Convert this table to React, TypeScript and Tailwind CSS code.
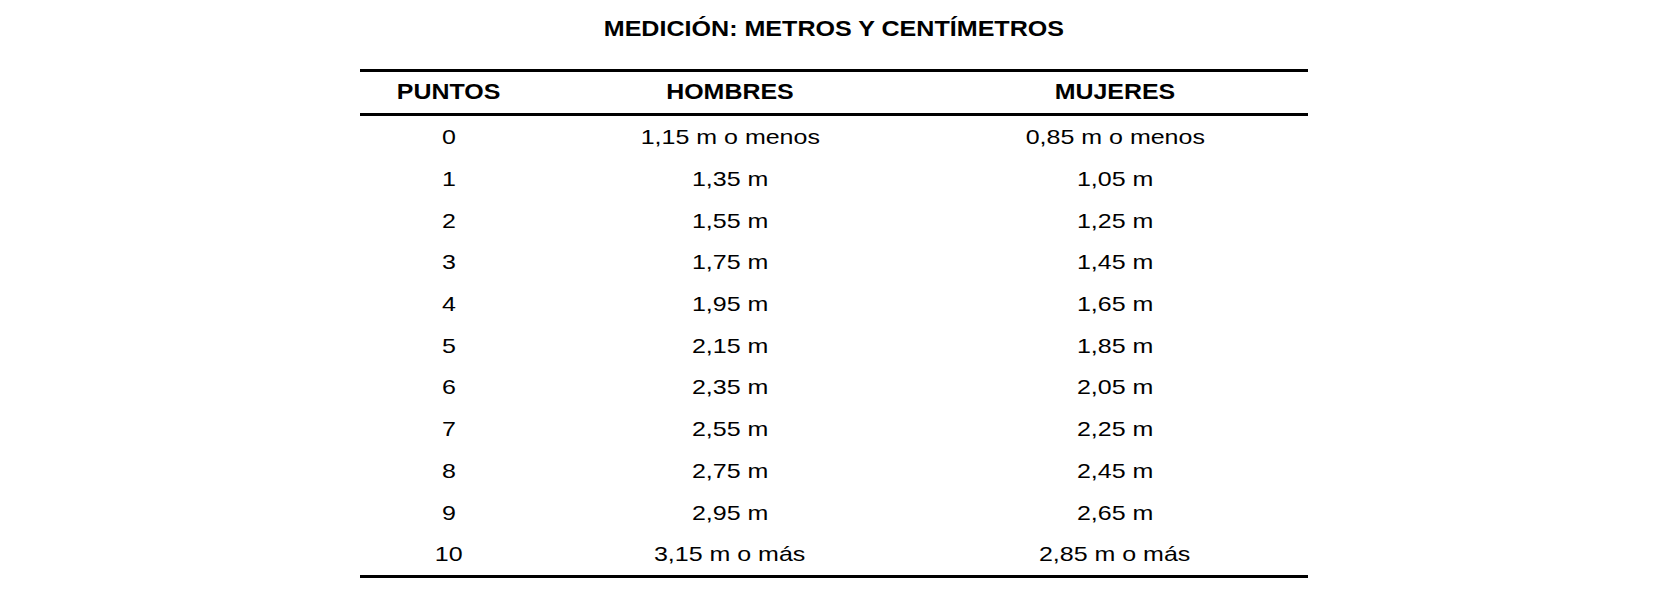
const rows: [string, string, string][] = [
  ["0", "1,15 m o menos", "0,85 m o menos"],
  ["1", "1,35 m", "1,05 m"],
  ["2", "1,55 m", "1,25 m"],
  ["3", "1,75 m", "1,45 m"],
  ["4", "1,95 m", "1,65 m"],
  ["5", "2,15 m", "1,85 m"],
  ["6", "2,35 m", "2,05 m"],
  ["7", "2,55 m", "2,25 m"],
  ["8", "2,75 m", "2,45 m"],
  ["9", "2,95 m", "2,65 m"],
  ["10", "3,15 m o más", "2,85 m o más"],
];

function Cell({ children, head }: { children: React.ReactNode; head?: boolean }) {
  return (
    <div className="flex items-center justify-center">
      <span className={head ? "inline-block scale-x-[1.16] whitespace-nowrap" : "inline-block scale-x-[1.19] whitespace-nowrap"}>
        {children}
      </span>
    </div>
  );
}

export default function App() {
  return (
    <div className="h-[592px] w-full bg-white text-black font-['Liberation_Sans',Arial,sans-serif]">
      <div className="pt-[18px] text-center text-[22px] font-bold leading-[22px]">
        <span className="inline-block scale-x-[1.14] whitespace-nowrap">
          MEDICIÓN: METROS Y CENTÍMETROS
        </span>
      </div>

      <div className="mx-auto mt-[29px] w-[948px] border-y-[3px] border-black">
        <div className="grid h-[44px] grid-cols-[178px_384px_386px] border-b-[3px] border-black text-[21.5px] font-bold leading-none">
          <Cell head>PUNTOS</Cell>
          <Cell head>HOMBRES</Cell>
          <Cell head>MUJERES</Cell>
        </div>

        <div className="text-[21px] leading-none">
          {rows.map(([pts, men, women]) => (
            <div key={pts} className="grid h-[41.7px] grid-cols-[178px_384px_386px]">
              <Cell>{pts}</Cell>
              <Cell>{men}</Cell>
              <Cell>{women}</Cell>
            </div>
          ))}
        </div>
      </div>
    </div>
  );
}
